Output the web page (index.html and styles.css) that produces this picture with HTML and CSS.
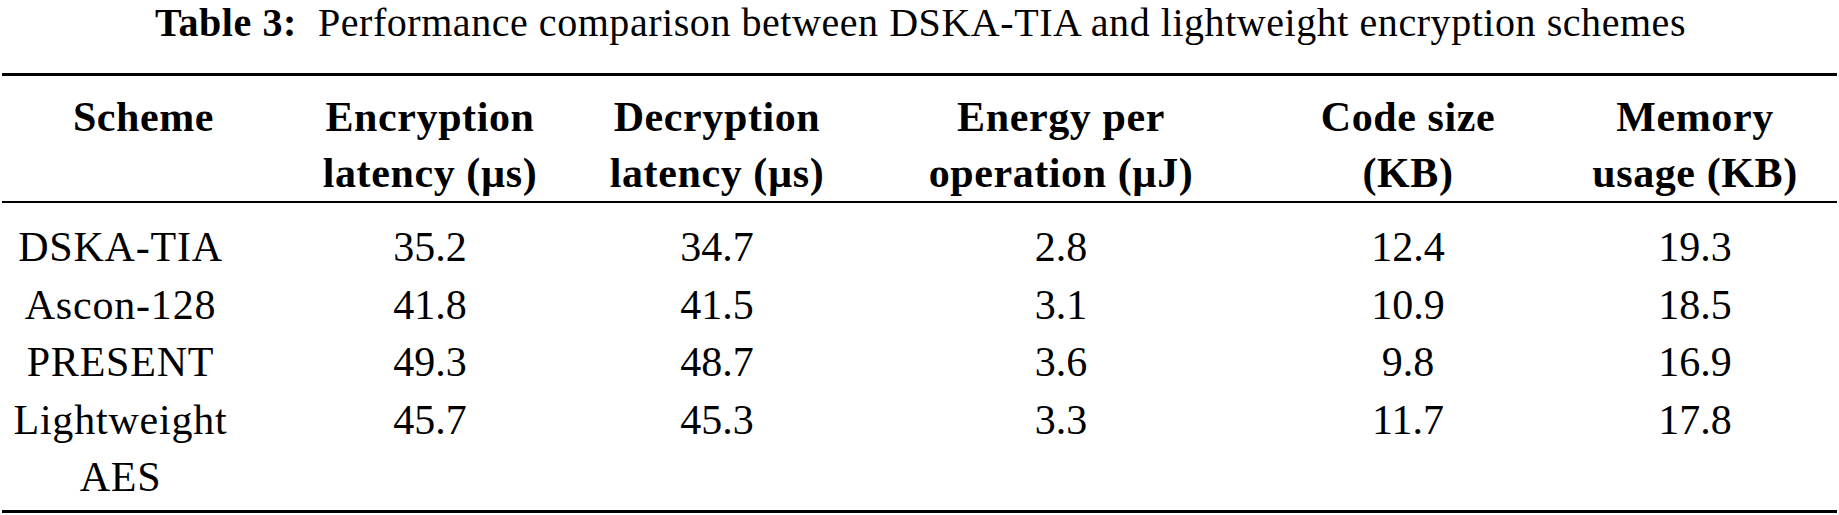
FILE: index.html
```html
<!DOCTYPE html>
<html lang="en">
<head>
<meta charset="utf-8">
<title>Table 3</title>
<link rel="stylesheet" href="styles.css">
</head>
<body>
<div class="page">
  <p class="caption"><span class="label">Table 3:</span>&nbsp; Performance comparison between DSKA-TIA and lightweight encryption schemes</p>
  <table class="data">
    <colgroup>
      <col class="c1"><col class="c2"><col class="c3"><col class="c4"><col class="c5"><col class="c6">
    </colgroup>
    <thead>
      <tr>
        <th>Scheme</th>
        <th>Encryption<br>latency (µs)</th>
        <th>Decryption<br>latency (µs)</th>
        <th>Energy per<br>operation (µJ)</th>
        <th>Code size<br>(KB)</th>
        <th>Memory<br>usage (KB)</th>
      </tr>
    </thead>
    <tbody>
      <tr class="first">
        <td class="name">DSKA-TIA</td><td>35.2</td><td>34.7</td><td>2.8</td><td>12.4</td><td>19.3</td>
      </tr>
      <tr>
        <td class="name">Ascon-128</td><td>41.8</td><td>41.5</td><td>3.1</td><td>10.9</td><td>18.5</td>
      </tr>
      <tr>
        <td class="name">PRESENT</td><td>49.3</td><td>48.7</td><td>3.6</td><td>9.8</td><td>16.9</td>
      </tr>
      <tr class="last">
        <td class="name">Lightweight AES</td><td>45.7</td><td>45.3</td><td>3.3</td><td>11.7</td><td>17.8</td>
      </tr>
    </tbody>
  </table>
</div>
</body>
</html>
```
FILE: styles.css
```css
html, body {
  margin: 0;
  padding: 0;
  background: #ffffff;
}

body {
  font-family: "Liberation Serif", "Times New Roman", serif;
  color: #000000;
}

.page {
  width: 1839px;
  padding-left: 2px;
  box-sizing: border-box;
}

.caption {
  margin: 0 0 28px 0;
  font-size: 40px;
  line-height: 45px;
  letter-spacing: 0.55px;
  text-align: center;
  white-space: nowrap;
}

.caption .label {
  font-weight: bold;
}

.data {
  width: 1835px;
  table-layout: fixed;
  border-collapse: collapse;
  border-top: 3px solid #000;
  border-bottom: 3px solid #000;
  font-size: 42px;
}

.c1 { width: 283px; }
.c2 { width: 290px; }
.c3 { width: 284px; }
.c4 { width: 404px; }
.c5 { width: 290px; }
.c6 { width: 284px; }

.data th {
  font-weight: bold;
  line-height: 56px;
  letter-spacing: 0.6px;
  padding: 13px 0 0 0;
  vertical-align: top;
  text-align: center;
  border-bottom: 2px solid #000;
}

.data td {
  line-height: 57.5px;
  padding: 0;
  text-align: center;
  vertical-align: top;
}

.data td.name {
  padding-right: 46px;
  letter-spacing: 0.8px;
}

.data tr.first td {
  padding-top: 16px;
}

.data tr.last td {
  padding-bottom: 3px;
}
```
